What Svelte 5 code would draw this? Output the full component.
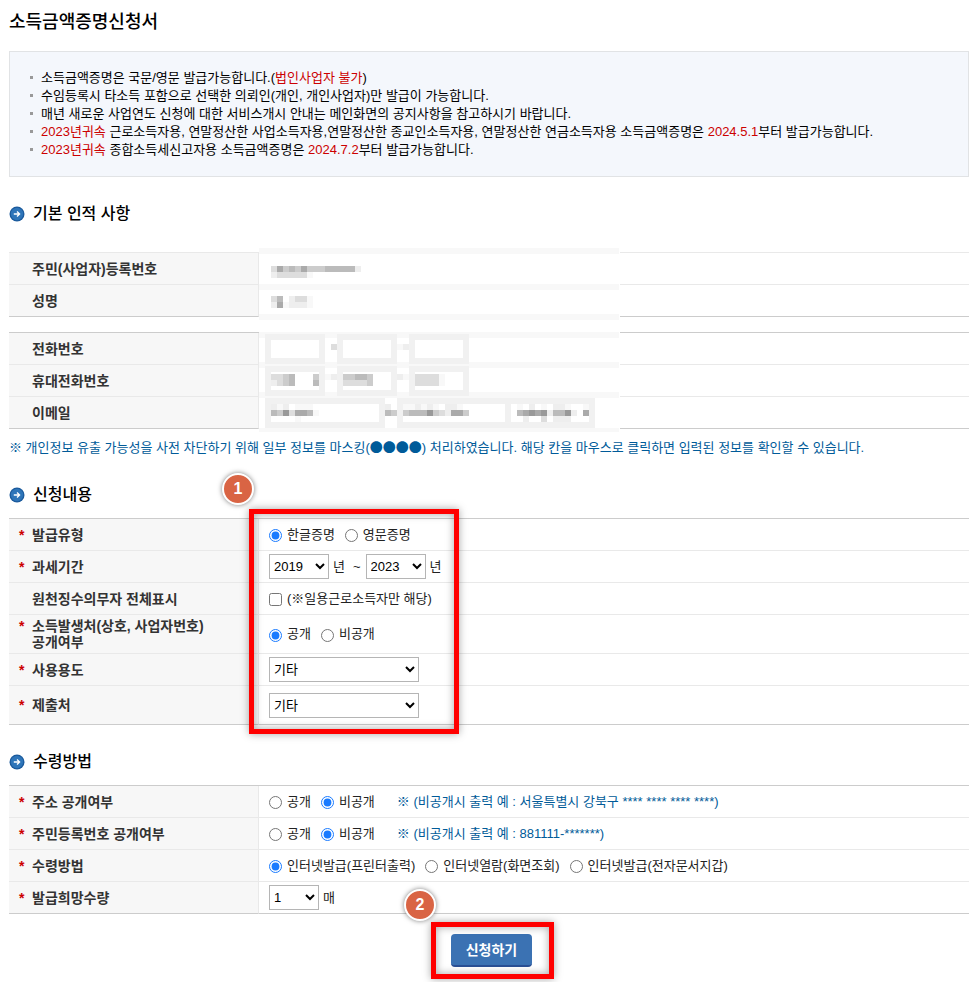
<script>
  let language = $state("ko");
  let fromYear = $state("2019");
  let toYear = $state("2023");
  let source = $state("open");
  let address = $state("closed");
  let residentNo = $state("closed");
  let receipt = $state("print");

  const years = ["2019", "2020", "2021", "2022", "2023"];

  // masked personal data: one character per block, the character is its grey level
  const blocks = [
    { row: 0, cells: "f".repeat(60) },
    { row: 3, cells: "..dacbcacccbbbbbe" },
    { row: 4, cells: "..edddddf" },
    { row: 6, cells: "f".repeat(60) },
    { row: 8, cells: "..db.eddf" },
    { row: 9, cells: "..eafeeef" },
    { row: 11, cells: "f".repeat(60) },
    { row: 14, cells: "f".repeat(60) },
    { row: 16, cells: "............d..........fe" },
    { row: 19, cells: "f".repeat(60) },
    { row: 21, cells: "..ddcb...cdfe.ccbbc....ef.ddddf" },
    { row: 22, cells: "..edcb...be...ddddc.......ddddf" },
    { row: 24, cells: "f".repeat(60) },
    { row: 26, cells: "..efe.fff............e..ffefef.eef.........f.e.f.eef..f" },
    { row: 27, cells: "..bc9daabf...........bc.cbbb9cdeaac........ba9a9ebb9e.aa" },
    { row: 28, cells: "......f.....................................e..d.eee" },
    { row: 30, cells: "f".repeat(60) },
  ];

  function grey(level) {
    return level === "f" ? "#f8f8f8" : "#" + level.repeat(3);
  }
</script>

{#snippet heading(text)}
  <h2>
    <svg class="arrow" viewBox="0 0 16 16" aria-hidden="true">
      <circle cx="8" cy="8" r="7.5" fill="#1b5a9c" />
      <circle cx="8" cy="8" r="6.2" fill="#2e75b9" />
      <path d="M4.8 8h5.6M8 5.6 10.6 8 8 10.4" fill="none" stroke="#fff" stroke-width="1.3" />
    </svg>
    {text}
  </h2>
{/snippet}

{#snippet label(text, required, target)}
  <th scope="row">
    <div class="label">
      <span class="star">{required ? "*" : ""}</span>
      {#if target}
        <label for={target}>{text}</label>
      {:else}
        <span>{text}</span>
      {/if}
    </div>
  </th>
{/snippet}

<main>
  <h1>소득금액증명신청서</h1>

  <ul class="info">
    <li>소득금액증명은 국문/영문 발급가능합니다.(<em>법인사업자 불가</em>)</li>
    <li>수임등록시 타소득 포함으로 선택한 의뢰인(개인, 개인사업자)만 발급이 가능합니다.</li>
    <li>매년 새로운 사업연도 신청에 대한 서비스개시 안내는 메인화면의 공지사항을 참고하시기 바랍니다.</li>
    <li>
      <em>2023년귀속</em> 근로소득자용, 연말정산한 사업소득자용,연말정산한 종교인소득자용, 연말정산한 연금소득자용 소득금액증명은
      <em>2024.5.1</em>부터 발급가능합니다.
    </li>
    <li><em>2023년귀속</em> 종합소득세신고자용 소득금액증명은 <em>2024.7.2</em>부터 발급가능합니다.</li>
  </ul>

  {@render heading("기본 인적 사항")}
  <div class="personal">
    <table class="light">
      <tbody>
        <tr>{@render label("주민(사업자)등록번호")}<td></td></tr>
        <tr>{@render label("성명")}<td></td></tr>
      </tbody>
    </table>
    <table>
      <tbody>
        <tr>
          {@render label("전화번호", false, "phone")}
          <td class="masked">
            <div class="fields">
              <input id="phone" type="text" readonly />
              <input type="text" aria-label="전화번호 2" readonly />
              <input type="text" aria-label="전화번호 3" readonly />
            </div>
          </td>
        </tr>
        <tr>
          {@render label("휴대전화번호", false, "mobile")}
          <td class="masked">
            <div class="fields">
              <input id="mobile" type="text" readonly />
              <input type="text" aria-label="휴대전화번호 2" readonly />
              <input type="text" aria-label="휴대전화번호 3" readonly />
            </div>
          </td>
        </tr>
        <tr>
          {@render label("이메일", false, "email")}
          <td class="masked">
            <div class="fields">
              <input id="email" class="account" type="text" readonly />
              <div class="domain">
                <input type="text" aria-label="이메일 도메인" readonly />
                <select aria-label="이메일 도메인 선택"><option></option></select>
              </div>
            </div>
          </td>
        </tr>
      </tbody>
    </table>
    <svg class="mosaic" viewBox="0 0 361 184" shape-rendering="crispEdges" aria-hidden="true">
      <rect width="361" height="184" fill="#fff" />
      {#each blocks as { row, cells }}
        {#each cells as level, col}
          {#if level !== "."}
            <rect x={col * 6} y={row * 6} width="6" height="6" fill={grey(level)} />
          {/if}
        {/each}
      {/each}
    </svg>
  </div>
  <p class="notice">
    ※ 개인정보 유출 가능성을 사전 차단하기 위해 일부 정보를 마스킹(<span class="dots">●●●●</span>) 처리하였습니다. 해당 칸을 마우스로 클릭하면 입력된 정보를 확인할 수 있습니다.
  </p>

  {@render heading("신청내용")}
  <div class="request">
    <table>
      <tbody>
        <tr>
          {@render label("발급유형", true)}
          <td>
            <div class="options">
              <label><input type="radio" value="ko" bind:group={language} />한글증명</label>
              <label><input type="radio" value="en" bind:group={language} />영문증명</label>
            </div>
          </td>
        </tr>
        <tr>
          {@render label("과세기간", true, "from-year")}
          <td>
            <div class="period">
              <select id="from-year" class="year" bind:value={fromYear}>
                {#each years as year}<option>{year}</option>{/each}
              </select>
              <span>년</span>
              <span class="tilde">~</span>
              <select class="year" aria-label="과세기간 종료" bind:value={toYear}>
                {#each years as year}<option>{year}</option>{/each}
              </select>
              <span>년</span>
            </div>
          </td>
        </tr>
        <tr>
          {@render label("원천징수의무자 전체표시", false)}
          <td>
            <div class="options">
              <label><input type="checkbox" />(※일용근로소득자만 해당)</label>
            </div>
          </td>
        </tr>
        <tr class="tall">
          <th scope="row">
            <div class="label">
              <span class="star">*</span>
              <span>소득발생처(상호, 사업자번호)<br />공개여부</span>
            </div>
          </th>
          <td>
            <div class="options">
              <label><input type="radio" value="open" bind:group={source} />공개</label>
              <label><input type="radio" value="closed" bind:group={source} />비공개</label>
            </div>
          </td>
        </tr>
        <tr>
          {@render label("사용용도", true, "purpose")}
          <td><select id="purpose" class="wide"><option>기타</option></select></td>
        </tr>
        <tr class="tall">
          {@render label("제출처", true, "submit-to")}
          <td><select id="submit-to" class="wide"><option>기타</option></select></td>
        </tr>
      </tbody>
    </table>
    <div class="frame"><span class="badge">1</span></div>
  </div>

  {@render heading("수령방법")}
  <table>
    <tbody>
      <tr>
        {@render label("주소 공개여부", true)}
        <td>
          <div class="options">
            <label><input type="radio" value="open" bind:group={address} />공개</label>
            <label><input type="radio" value="closed" bind:group={address} />비공개</label>
            <span class="hint">※ (비공개시 출력 예 : 서울특별시 강북구 **** **** **** ****)</span>
          </div>
        </td>
      </tr>
      <tr>
        {@render label("주민등록번호 공개여부", true)}
        <td>
          <div class="options">
            <label><input type="radio" value="open" bind:group={residentNo} />공개</label>
            <label><input type="radio" value="closed" bind:group={residentNo} />비공개</label>
            <span class="hint">※ (비공개시 출력 예 : 881111-*******)</span>
          </div>
        </td>
      </tr>
      <tr>
        {@render label("수령방법", true)}
        <td>
          <div class="options">
            <label><input type="radio" value="print" bind:group={receipt} />인터넷발급(프린터출력)</label>
            <label><input type="radio" value="view" bind:group={receipt} />인터넷열람(화면조회)</label>
            <label><input type="radio" value="wallet" bind:group={receipt} />인터넷발급(전자문서지갑)</label>
          </div>
        </td>
      </tr>
      <tr>
        {@render label("발급희망수량", true, "copies")}
        <td>
          <div class="period">
            <select id="copies" class="copies"><option>1</option><option>2</option></select>
            <span>매</span>
          </div>
        </td>
      </tr>
    </tbody>
  </table>

  <div class="actions">
    <div class="submit">
      <button type="button">신청하기</button>
      <div class="frame outer"><span class="badge">2</span></div>
    </div>
  </div>
</main>

<style>
  :global(body) {
    margin: 0;
    background: #fff;
  }

  main {
    padding: 10px 8px 4px 9px;
    font-family: "Liberation Sans", "Noto Sans CJK KR", sans-serif;
    font-size: 13px;
    line-height: 18px;
    color: #222;
  }

  h1 {
    margin: 0 0 17px;
    font-size: 18px;
    line-height: 24px;
    font-weight: 500;
    color: #000;
  }

  h2 {
    display: flex;
    align-items: center;
    gap: 8px;
    margin: 25px 0 11px;
    font-size: 16px;
    line-height: 24px;
    font-weight: 500;
    color: #000;
  }

  .arrow {
    width: 16px;
    height: 16px;
  }

  .info {
    margin: 0;
    padding: 17px 20px;
    list-style: none;
    border: 1px solid #e1e3e5;
    background: #f4f7fc;
    color: #000;
  }

  .info li {
    padding-left: 11px;
    background: linear-gradient(#999, #999) 0 7px / 3px 3px no-repeat;
  }

  em {
    font-style: normal;
    color: #c00;
  }

  table {
    width: 100%;
    table-layout: fixed;
    border-spacing: 0;
    border-top: 1px solid #ccc;
  }

  tr {
    height: 32px;
  }

  .tall {
    height: 39px;
  }

  th,
  td {
    box-sizing: border-box;
    height: inherit;
    padding: 0 0 0 10px;
    border-bottom: 1px solid #e9e9e9;
    text-align: left;
  }

  tr:last-child > th,
  tr:last-child > td {
    border-bottom-color: #ccc;
  }

  th {
    width: 250px;
    border-right: 1px solid #e9e9e9;
    background: #f7f7f7;
    font-size: 14px;
    line-height: 16px;
    font-weight: 700;
    color: #333;
  }

  .label {
    display: flex;
  }

  .star {
    width: 13px;
    flex-shrink: 0;
    color: #c00;
  }

  .personal,
  .request,
  .submit {
    position: relative;
  }

  .personal {
    margin-top: 26px;
  }

  .light {
    margin-bottom: 15px;
    border-top-color: #e9e9e9;
  }

  .mosaic {
    position: absolute;
    top: -4px;
    left: 250px;
    width: 361px;
    height: 184px;
    pointer-events: none;
  }

  .masked {
    padding-left: 6px;
    vertical-align: bottom;
  }

  .fields {
    position: relative;
    z-index: 1;
    display: flex;
    gap: 12px;
  }

  .fields input,
  .fields select {
    box-sizing: border-box;
    width: 60px;
    height: 30px;
    margin: 0;
    padding: 0;
    border: 6px solid #f1f1f1;
    border-radius: 0;
    background: transparent;
    appearance: none;
  }

  .fields .account {
    width: 120px;
  }

  .domain {
    display: flex;
  }

  .domain input {
    width: 114px;
  }

  .domain select {
    width: 84px;
    border-left: 0;
  }

  .notice {
    margin: 9px 0 26px;
    color: #005b99;
  }

  .dots {
    font-family: "Noto Sans CJK KR", sans-serif;
  }

  .options,
  .period {
    display: flex;
    align-items: center;
  }

  .options {
    gap: 10px;
  }

  .options label {
    display: flex;
    align-items: center;
    gap: 5px;
  }

  .options input {
    width: 13px;
    height: 13px;
    margin: 2px 0 0;
    accent-color: #1a7bff;
  }

  .hint {
    margin-left: 12px;
    color: #005b99;
  }

  .period {
    gap: 4px;
  }

  .tilde {
    margin: 0 1px 0 4px;
  }

  .year,
  .wide,
  .copies {
    display: block;
    box-sizing: border-box;
    width: 60px;
    height: 25px;
    margin: 0;
    padding: 0;
    border: 1px solid #b5b5b5;
    border-radius: 0;
    background: #fff;
    font-family: "Liberation Sans", "Noto Sans CJK KR", sans-serif;
    font-size: 13px;
    color: #000;
  }

  .wide {
    width: 150px;
  }

  .copies {
    width: 50px;
  }

  /* numbered callouts over the form */
  .frame {
    position: absolute;
    top: -9px;
    bottom: -9px;
    left: 240px;
    box-sizing: border-box;
    width: 210px;
    border: 5px solid #f00;
    box-shadow:
      0 0 8px rgba(0, 0, 0, 0.35),
      inset 0 0 8px rgba(0, 0, 0, 0.35);
    pointer-events: none;
  }

  .outer {
    top: -12px;
    right: -22px;
    bottom: -12px;
    left: -20px;
    width: auto;
  }

  .badge {
    position: absolute;
    top: -41px;
    left: -32px;
    box-sizing: border-box;
    width: 32px;
    height: 32px;
    border: 2px solid #fff;
    border-radius: 50%;
    background: #d96444;
    box-shadow: 0 0 5px rgba(0, 0, 0, 0.5);
    font: bold 16px/28px "Liberation Sans", sans-serif;
    text-align: center;
    color: #fff;
  }

  .outer .badge {
    top: -38px;
  }

  .actions {
    display: flex;
    justify-content: center;
    padding: 20px 0 12px 5px;
  }

  button {
    display: block;
    width: 81px;
    height: 33px;
    padding: 0;
    border: 0;
    border-bottom: 2px solid #2a4f94;
    border-radius: 4px;
    background: #3b72b3;
    font: bold 14px/20px "Liberation Sans", "Noto Sans CJK KR", sans-serif;
    color: #fff;
    cursor: pointer;
  }
</style>
